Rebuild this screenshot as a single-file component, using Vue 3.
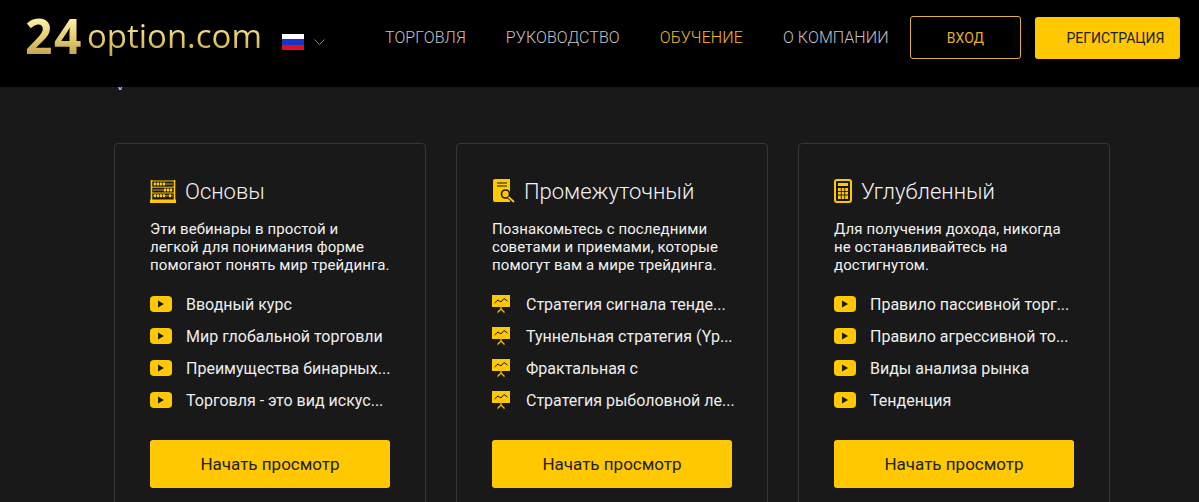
<template>
    <div class="page">
        <header class="top-bar">
            <div class="logo"><span class="logo-num">24</span><span class="logo-name">option.com</span></div>
            <div class="lang">
                <span class="flag"></span>
                <svg class="chevron" width="11" height="6" viewBox="0 0 11 6"><path d="M0.5 0.5 L5.5 5.5 L10.5 0.5" fill="none" stroke="#8a8a8a" stroke-width="1" /></svg>
            </div>
            <nav class="main-nav">
                <a v-for="item in navItems" :key="item.label" class="nav-link" :class="{ active: item.active }">{{ item.label }}</a>
            </nav>
            <div class="auth">
                <button class="btn-login">ВХОД</button>
                <button class="btn-register">РЕГИСТРАЦИЯ</button>
            </div>
        </header>

        <main class="content">
            <div class="crumb">у</div>
            <section class="cards">
                <article v-for="card in cards" :key="card.title" class="card">
                    <h2 class="card-title">
                        <svg v-if="card.icon === 'abacus'" class="title-icon" viewBox="0 0 26 23" width="26" height="23">
                            <path d="M1.5 0 V20 M24.5 0 V20" stroke="#ffc800" stroke-width="1.6" fill="none" />
                            <path d="M1 1 H25 M1 7.2 H25 M1 13 H25" stroke="#ffc800" stroke-width="1" fill="none" />
                            <path d="M3 4 H23 M3 10 H23 M3 15.8 H23" stroke="#ffc800" stroke-width="0.8" fill="none" />
                            <path d="M0 19.5 H26 V23 H0 Z" fill="#ffc800" />
                            <path d="M4 2.5 h2 v3 h-2 Z M7 2.5 h2 v3 h-2 Z M10 2.5 h2 v3 h-2 Z M13 2.5 h2 v3 h-2 Z M14 8.5 h2 v3 h-2 Z M17 8.5 h2 v3 h-2 Z M20 8.5 h2 v3 h-2 Z M4 14.3 h2 v3 h-2 Z M7 14.3 h2 v3 h-2 Z M10 14.3 h2 v3 h-2 Z M13 14.3 h2 v3 h-2 Z M19 14.3 h2 v3 h-2 Z" fill="#ffc800" />
                        </svg>
                        <svg v-else-if="card.icon === 'doc'" class="title-icon" viewBox="0 0 23 24" width="23" height="24">
                            <path d="M1 2 Q1 0 3 0 H18 V23 H3 Q1 23 1 21 Z" fill="#ffc800" />
                            <path d="M5 4 H15 M5 7 H15" stroke="#191919" stroke-width="1.2" />
                            <circle cx="13.5" cy="15" r="4" fill="#ffc800" stroke="#191919" stroke-width="1.6" />
                            <path d="M16.5 18 L22 23" stroke="#191919" stroke-width="3.4" />
                            <path d="M16.5 18 L22 23" stroke="#ffc800" stroke-width="1.8" />
                        </svg>
                        <svg v-else class="title-icon" viewBox="0 0 18 24" width="18" height="24">
                            <rect x="1" y="1" width="16" height="22" rx="2" fill="none" stroke="#ffc800" stroke-width="2" />
                            <rect x="4" y="4" width="10" height="3" fill="#ffc800" />
                            <path d="M4 9 h10 v11 h-10 Z" fill="#ffc800" />
                            <path d="M4 12.5 H14 M4 16 H14 M7.3 9 V20 M10.7 9 V20" stroke="#191919" stroke-width="0.9" />
                        </svg>
                        <span>{{ card.title }}</span>
                    </h2>
                    <p class="card-text">{{ card.text }}</p>
                    <ul class="lessons">
                        <li v-for="lesson in card.lessons" :key="lesson" class="lesson">
                            <svg v-if="card.bullet === 'play'" class="bullet" viewBox="0 0 22 16" width="22" height="16">
                                <rect x="0" y="0" width="22" height="16" rx="4" fill="#ffc800" />
                                <path d="M8 4.5 L14 8 L8 11.5 Z" fill="#191919" />
                            </svg>
                            <svg v-else class="bullet bullet-chart" viewBox="0 0 18 18" width="18" height="18">
                                <rect x="0" y="0" width="18" height="12" fill="#ffc800" />
                                <path d="M2.5 8 L6 5 L9 7 L12 3.5 L15.5 6" fill="none" stroke="#191919" stroke-width="1" />
                                <path d="M9 12 V14 M9 14 L5.5 17.5 M9 14 L12.5 17.5" stroke="#ffc800" stroke-width="1.2" fill="none" />
                            </svg>
                            <span class="lesson-text">{{ lesson }}</span>
                        </li>
                    </ul>
                    <button class="btn-start">Начать просмотр</button>
                </article>
            </section>
        </main>
    </div>
</template>

<script setup>
const navItems = [
    { label: 'ТОРГОВЛЯ' },
    { label: 'РУКОВОДСТВО' },
    { label: 'ОБУЧЕНИЕ', active: true },
    { label: 'О КОМПАНИИ' },
];

const cards = [
    {
        title: 'Основы',
        icon: 'abacus',
        bullet: 'play',
        text: 'Эти вебинары в простой и\nлегкой для понимания форме\nпомогают понять мир трейдинга.',
        lessons: ['Вводный курс', 'Мир глобальной торговли', 'Преимущества бинарных...', 'Торговля - это вид искус...'],
    },
    {
        title: 'Промежуточный',
        icon: 'doc',
        bullet: 'chart',
        text: 'Познакомьтесь с последними\nсоветами и приемами, которые\nпомогут вам а мире трейдинга.',
        lessons: ['Стратегия сигнала тенде...', 'Туннельная стратегия (Үр...', 'Фрактальная с', 'Стратегия рыболовной ле...'],
    },
    {
        title: 'Углубленный',
        icon: 'calc',
        bullet: 'play',
        text: 'Для получения дохода, никогда\nне останавливайтесь на\nдостигнутом.',
        lessons: ['Правило пассивной торг...', 'Правило агрессивной то...', 'Виды анализа рынка', 'Тенденция'],
    },
];
</script>

<style>
html, body {
    margin: 0;
    height: 502px;
    overflow: hidden;
    background: #191919;
}
</style>

<style scoped>
.page {
    font-family: Roboto, "Liberation Sans", sans-serif;
    color: #fff;
}
.top-bar {
    display: flex;
    align-items: center;
    height: 87px;
    background: #000;
    padding: 0 19px 12px 25px;
    box-sizing: border-box;
}
.logo {
    display: flex;
    align-items: flex-end;
    width: 238px;
    height: 40px;
    margin-bottom: 4px;
    background: linear-gradient(180deg, #fff6ae 0%, #e6cc6c 55%, #c2a24e 100%);
    -webkit-background-clip: text;
    background-clip: text;
    color: transparent;
    white-space: nowrap;
}
.logo-num {
    font-family: "Open Sans", sans-serif;
    font-weight: 700;
    font-size: 48px;
    line-height: 40px;
    letter-spacing: 1.5px;
}
.logo-name {
    font-family: "Open Sans", sans-serif;
    font-size: 33px;
    line-height: 40px;
    margin-left: 4px;
}
.lang {
    display: flex;
    align-items: center;
    gap: 10px;
    margin-left: 19px;
    padding-top: 9px;
}
.flag {
    display: block;
    width: 22px;
    height: 16px;
    background: linear-gradient(180deg, #fff 0 33%, #1a33c4 33% 66%, #e0101c 66%);
}
.main-nav {
    display: flex;
    gap: 40px;
    margin-left: 60px;
}
.nav-link {
    font-size: 16px;
    font-weight: 300;
    letter-spacing: 0.1px;
    color: #c4c4c4;
}
.nav-link.active {
    color: #f5b921;
}
.auth {
    display: flex;
    align-items: center;
    gap: 14px;
    margin-left: auto;
}
.btn-login,
.btn-register,
.btn-start {
    font-family: inherit;
    cursor: pointer;
    border-radius: 3px;
}
.btn-login {
    width: 111px;
    height: 43px;
    background: transparent;
    border: 1px solid #e0b23a;
    color: #e3ae2c;
    font-size: 14px;
}
.btn-register {
    width: 145px;
    height: 42px;
    padding: 0 0 0 16px;
    background: #ffc800;
    border: 0;
    color: #222;
    font-size: 14px;
}
.content {
    padding: 0 0 0 114px;
}
.crumb {
    height: 3px;
    overflow: hidden;
    padding-left: 3px;
    font-size: 13px;
    line-height: 0;
    color: #ccc;
    margin-bottom: 53px;
}
.cards {
    display: flex;
    gap: 30px;
}
.card {
    width: 312px;
    height: 400px;
    box-sizing: border-box;
    border: 1px solid #363636;
    border-radius: 4px;
    padding: 32px 35px;
    background: #191919;
}
.card-title {
    display: flex;
    align-items: center;
    gap: 9px;
    height: 30px;
    margin: 0 0 14px;
    font-size: 22px;
    font-weight: 300;
    color: #f2f2f2;
}
.title-icon {
    flex: none;
}
.card-text {
    margin: 0 0 14px;
    font-size: 15px;
    line-height: 18px;
    letter-spacing: 0.1px;
    white-space: pre;
    color: #f2f2f2;
}
.lessons {
    list-style: none;
    margin: 0 0 24px;
    padding: 0;
}
.lesson {
    display: flex;
    align-items: center;
    height: 32px;
    font-size: 16px;
    color: #eee;
}
.bullet {
    flex: none;
    margin-right: 14px;
}
.bullet-chart {
    margin-right: 16px;
}
.lesson-text {
    white-space: nowrap;
}
.btn-start {
    display: block;
    width: 240px;
    height: 48px;
    background: #ffc800;
    border: 0;
    color: #222;
    font-size: 17px;
}
</style>
